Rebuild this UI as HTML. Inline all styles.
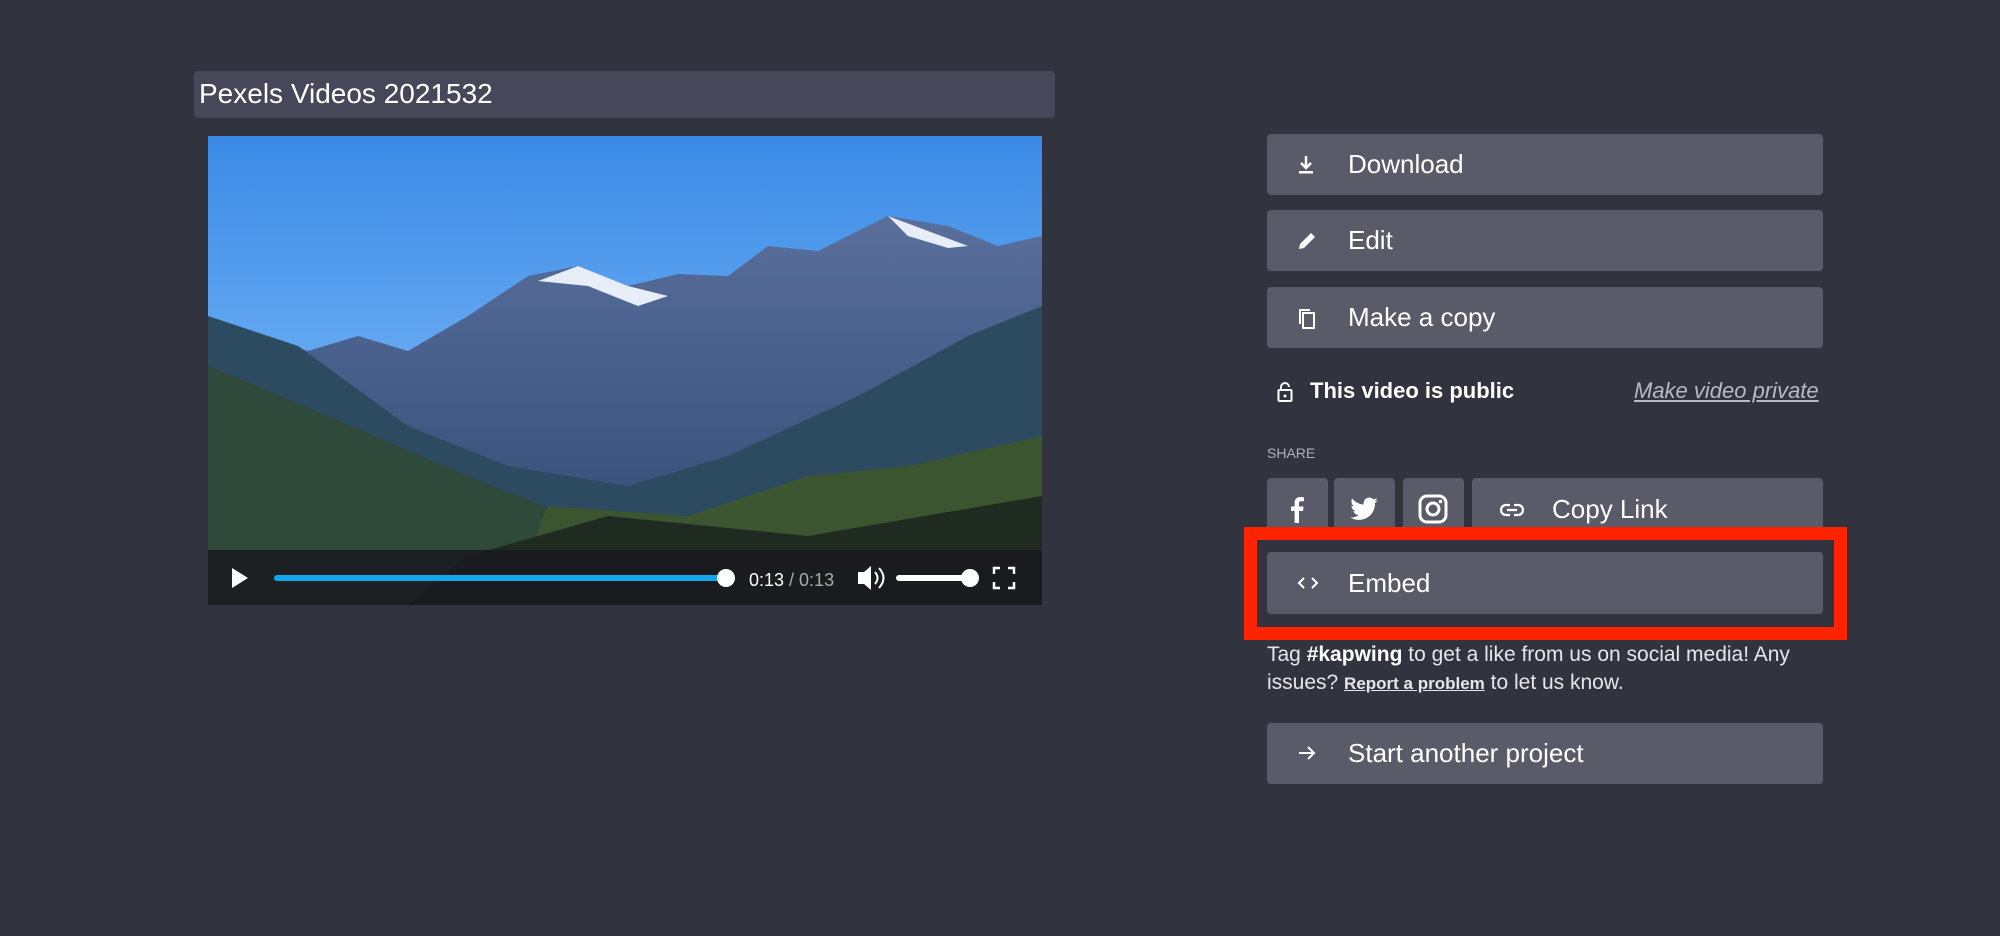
<!DOCTYPE html>
<html><head><style>
*{margin:0;padding:0;box-sizing:border-box}
body{width:2000px;height:936px;background:#31343f;font-family:"Liberation Sans","DejaVu Sans",sans-serif;color:#fff;position:relative;overflow:hidden}
.abs{position:absolute}
.title{left:194px;top:71px;width:861px;height:47px;background:#464859;border-radius:4px;font-size:28px;padding:8px 5px;line-height:30px}
.btn{position:absolute;left:1267px;width:556px;height:61px;background:#5a5b68;border-radius:4px;font-size:26px;line-height:61px;padding-left:81px}
.btn svg{position:absolute;left:29px;top:20px}
.sq{position:absolute;top:478px;width:61px;height:62px;background:#5a5b68;border-radius:4px}
.sq svg{position:absolute;left:15px;top:16px}
</style></head><body>
<div class="abs title">Pexels Videos 2021532</div>
<div class="abs" style="left:208px;top:136px;width:834px;height:469px;overflow:hidden;background:#4f94e8">
<svg width="834" height="469" viewBox="0 0 834 469">
<defs><linearGradient id="sky" x1="0" y1="0" x2="0" y2="1"><stop offset="0" stop-color="#3a8ae6"/><stop offset="0.6" stop-color="#70b0f4"/><stop offset="1" stop-color="#a4ccf2"/></linearGradient>
<linearGradient id="m" x1="0" y1="0" x2="0" y2="1"><stop offset="0" stop-color="#5a6f9c"/><stop offset="1" stop-color="#2e4670"/></linearGradient></defs>
<rect width="834" height="469" fill="url(#sky)"/>
<polygon points="0,180 100,215 150,200 200,215 260,180 320,140 370,130 420,150 470,138 520,140 560,110 610,115 680,80 740,90 790,110 834,100 834,469 0,469" fill="url(#m)"/>
<polygon points="330,145 370,130 420,150 460,160 430,170 380,150" fill="#e8eef8"/>
<polygon points="680,80 720,95 760,110 740,112 700,100" fill="#e8eef8"/>
<polygon points="0,180 90,210 200,290 300,330 420,350 520,320 650,260 760,200 834,170 834,469 0,469" fill="#2c4a60"/>
<polygon points="0,230 120,280 260,340 360,380 300,469 0,469" fill="#2f4a3a"/>
<polygon points="340,370 480,380 600,340 700,330 834,300 834,469 300,469" fill="#3a5530"/>
<polygon points="260,420 400,380 600,400 834,360 834,469 200,469" fill="#1f2a20"/>
<rect y="414" width="834" height="55" fill="rgba(25,25,30,0.85)"/>
<polygon points="24,432 24,452 40,442" fill="#fff"/>
<rect x="66" y="439" width="455" height="6" rx="3" fill="#12a6ec"/>
<circle cx="518" cy="442" r="9" fill="#fff"/>
<text x="541" y="450" font-family="Liberation Sans" font-size="18" fill="#fff">0:13 <tspan fill="#aaa">/ 0:13</tspan></text>
<polygon points="650,436 656,436 663,430 663,454 656,448 650,448" fill="#fff"/>
<path d="M667,436 q5,6 0,12 M671,432 q9,10 0,20" stroke="#fff" stroke-width="2" fill="none"/>
<rect x="688" y="439" width="80" height="6" rx="3" fill="#fff"/>
<circle cx="762" cy="442" r="9" fill="#fff"/>
<path d="M792,432 h-6 v6 M800,432 h6 v6 M792,452 h-6 v-6 M800,452 h6 v-6" stroke="#fff" stroke-width="2.5" fill="none"/>
</svg></div>

<div class="btn" style="top:134px">
<svg width="20" height="22" viewBox="0 0 20 22"><path d="M10 2v11M5 9l5 5 5-5" stroke="#fff" stroke-width="2.5" fill="none"/><rect x="3" y="17" width="14" height="2.5" fill="#fff"/></svg>Download</div>
<div class="btn" style="top:210px">
<svg width="22" height="22" viewBox="0 0 22 22"><path d="M3 19l1-5 11-11 4 4-11 11z" fill="#fff"/></svg>Edit</div>
<div class="btn" style="top:287px">
<svg width="22" height="24" viewBox="0 0 22 24"><rect x="7" y="6" width="11" height="15" fill="none" stroke="#fff" stroke-width="2"/><path d="M4 17V3h10" stroke="#fff" stroke-width="2" fill="none"/></svg>Make a copy</div>

<svg class="abs" style="left:1277px;top:381px" width="16" height="22" viewBox="0 0 16 22"><path d="M4 9V6a4 4 0 0 1 8 0" stroke="#fff" stroke-width="2" fill="none"/><rect x="1.5" y="9" width="13" height="11" rx="1" fill="none" stroke="#fff" stroke-width="2"/><circle cx="8" cy="15" r="1.5" fill="#fff"/></svg>
<div class="abs" style="left:1310px;top:378px;font-size:22px;font-weight:bold">This video is public</div>
<div class="abs" style="left:1634px;top:378px;font-size:22px;font-style:italic;text-decoration:underline;color:#b8b9c2">Make video private</div>
<div class="abs" style="left:1267px;top:445px;font-size:14px;color:#b0b1ba">SHARE</div>

<div class="sq" style="left:1267px"><svg width="30" height="30" viewBox="0 0 30 30"><path d="M17 29V17h4l.6-4.5H17v-3c0-1.3.4-2.2 2.3-2.2H22V3.3C21.5 3.2 20 3 18.4 3 15 3 12.6 5 12.6 8.9v3.6H9V17h3.6v12z" fill="#fff"/></svg></div>
<div class="sq" style="left:1334px"><svg width="30" height="30" viewBox="0 0 24 24"><path d="M23 5c-.8.4-1.7.6-2.6.7.9-.6 1.6-1.4 2-2.5-.9.5-1.9.9-2.9 1.1a4.5 4.5 0 0 0-7.7 4.1C8 8.2 4.7 6.400 2.500 3.700c-1.200 2.100-.4 4.700 1.400 6-.7 0-1.400-.2-2-.6 0 2.200 1.500 4.100 3.600 4.500-.7.200-1.400.200-2 .1.600 1.800 2.300 3.100 4.200 3.100A9 9 0 0 1 1 18.700 12.800 12.800 0 0 0 7.900 20.700c8.300 0 12.900-6.900 12.900-12.900v-.6c.9-.6 1.600-1.400 2.200-2.200z" fill="#fff"/></svg></div>
<div class="sq" style="left:1403px"><svg width="30" height="30" viewBox="0 0 30 30"><rect x="2" y="2" width="26" height="26" rx="7" fill="none" stroke="#fff" stroke-width="3"/><circle cx="15" cy="15" r="6" fill="none" stroke="#fff" stroke-width="3"/><circle cx="22.5" cy="7.5" r="1.8" fill="#fff"/></svg></div>
<div class="btn" style="left:1472px;top:478px;width:351px;height:62px;line-height:62px;padding-left:80px">
<svg width="24" height="14" viewBox="0 0 24 14" style="top:25px;left:28px"><path d="M10 2H6a5 5 0 0 0 0 10h4M14 2h4a5 5 0 0 1 0 10h-4M7 7h10" stroke="#fff" stroke-width="2.2" fill="none"/></svg>Copy Link</div>

<div class="abs" style="left:1244px;top:527px;width:603px;height:113px;border:13px solid #fe2400"></div>
<div class="btn" style="top:552px;height:62px;line-height:62px">
<svg width="24" height="16" viewBox="0 0 24 16" style="top:23px"><path d="M8 3L3 8l5 5M16 3l5 5-5 5" stroke="#fff" stroke-width="2" fill="none"/></svg>Embed</div>

<div class="abs" style="left:1267px;top:641px;width:530px;font-size:21px;line-height:28px;color:#e6e6ea">Tag <b style="color:#fff">#kapwing</b> to get a like from us on social media! Any issues? <u style="font-size:17px;font-weight:bold">Report a problem</u> to let us know.</div>

<div class="btn" style="top:723px">
<svg width="22" height="20" viewBox="0 0 22 20"><path d="M3 10h15M12 4l6 6-6 6" stroke="#fff" stroke-width="2" fill="none"/></svg>Start another project</div>
</body></html>
